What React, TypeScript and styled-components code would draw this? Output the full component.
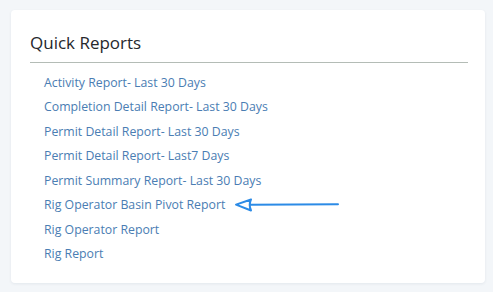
import React from "react";
import styled, { createGlobalStyle } from "styled-components";

const Global = createGlobalStyle`
  html, body { margin: 0; padding: 0; background: #f3f6f9; }
  body { font-family: "Open Sans", "Liberation Sans", sans-serif; }
`;

const Page = styled.div`
  width: 493px;
  height: 292px;
  padding: 10px 8px 9px 11px;
  box-sizing: border-box;
  display: flex;
`;

const Card = styled.section`
  flex: 1;
  background: #ffffff;
  border-radius: 4px;
  box-shadow: 0 1px 3px rgba(40, 60, 90, 0.08);
  padding: 21px 17px 0 19px;
  box-sizing: border-box;
`;

const Title = styled.h2`
  margin: 0;
  font-size: 17px;
  font-weight: 400;
  color: #26282c;
  line-height: 24px;
  padding-bottom: 7px;
  border-bottom: 1px solid #b4bcb6;
`;

const List = styled.ul`
  list-style: none;
  margin: 0;
  padding: 7px 0 0 14px;
  display: flex;
  flex-direction: column;
`;

const Item = styled.li`
  height: 24.5px;
  display: flex;
  align-items: center;
  gap: 9px;
`;

const Link = styled.a`
  font-size: 12.3px;
  color: #4a7db3;
  text-decoration: none;
  white-space: nowrap;
`;

const Arrow = () => (
  <svg width="106" height="16" viewBox="0 0 106 16">
    <path
      d="M104 7.2 C80 7.6 40 7.4 16 7.8 M17 2.5 L2 7.6 L17 13.5 C15.5 10 15.5 5.5 17 2.5"
      fill="none"
      stroke="#2c8be6"
      strokeWidth="2"
      strokeLinecap="round"
      strokeLinejoin="round"
    />
  </svg>
);

const reports = [
  "Activity Report- Last 30 Days",
  "Completion Detail Report- Last 30 Days",
  "Permit Detail Report- Last 30 Days",
  "Permit Detail Report- Last7 Days",
  "Permit Summary Report- Last 30 Days",
  "Rig Operator Basin Pivot Report",
  "Rig Operator Report",
  "Rig Report",
];

export default function App() {
  return (
    <>
      <Global />
      <Page>
        <Card>
          <Title>Quick Reports</Title>
          <List>
            {reports.map((r, i) => (
              <Item key={r}>
                <Link href="#">{r}</Link>
                {i === 5 && <Arrow />}
              </Item>
            ))}
          </List>
        </Card>
      </Page>
    </>
  );
}
